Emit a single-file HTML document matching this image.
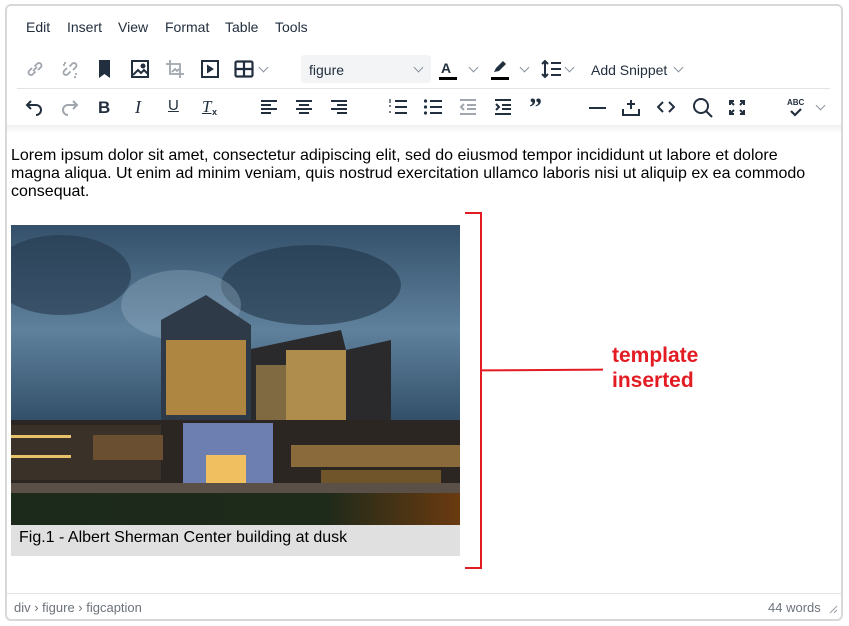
<!DOCTYPE html>
<html><head><meta charset="utf-8"><style>
*{box-sizing:border-box;margin:0;padding:0}
body{width:849px;height:626px;background:#fff;font-family:"Liberation Sans",Arial,sans-serif;position:relative;overflow:hidden}
.frame{position:absolute;left:5px;top:4px;width:838px;height:617px;border:2px solid #d8d8d8;border-radius:6px}
.menu{position:absolute;top:19px;font-size:14px;color:#222f3e}
.t{position:absolute;color:#222f3e}
svg.i{position:absolute}
.chev{position:absolute;width:7px;height:7px;border-right:1.5px solid #8a939d;border-bottom:1.5px solid #8a939d;transform:rotate(45deg)}
</style></head><body>
<div class="frame"></div>
<div style="position:absolute;left:7px;top:125px;width:834px;height:8px;background:linear-gradient(#eef0f2,#fff)"></div>
<div class="menu" style="left:26px">Edit</div>
<div class="menu" style="left:67px">Insert</div>
<div class="menu" style="left:118px">View</div>
<div class="menu" style="left:165px">Format</div>
<div class="menu" style="left:225px">Table</div>
<div class="menu" style="left:275px">Tools</div>

<svg class="i" style="left:24px;top:58px" width="22" height="22" viewBox="0 0 22 22" fill="none" stroke="#a0a6ad" stroke-width="1.8"><path d="M9 13l4-4M8 10l-3 3a2.5 2.5 0 003.5 3.5l3-3M14 12l3-3a2.5 2.5 0 00-3.5-3.5l-3 3"/></svg>
<svg class="i" style="left:59px;top:58px" width="22" height="22" viewBox="0 0 22 22" fill="none" stroke="#a0a6ad" stroke-width="1.8"><path d="M8 10l-3 3a2.5 2.5 0 003.5 3.5l3-3M14 12l3-3a2.5 2.5 0 00-3.5-3.5l-3 3M6 4v2M4 7h2M16 16h2M16 18v2"/></svg>
<svg class="i" style="left:97px;top:59px" width="16" height="20" viewBox="0 0 16 20"><path d="M2 1h11v18l-5.5-4L2 19z" fill="#222f3e"/></svg>
<svg class="i" style="left:130px;top:59px" width="20" height="20" viewBox="0 0 20 20" fill="none" stroke="#222f3e" stroke-width="2"><rect x="2" y="2" width="16" height="16"/><path d="M3 16l5-5 3 3 3-3 4 4" /><circle cx="13" cy="7" r="1.5" fill="#222f3e"/></svg>
<svg class="i" style="left:164px;top:58px" width="22" height="22" viewBox="0 0 22 22" fill="none" stroke="#a0a6ad" stroke-width="1.8"><path d="M6 2v14h14M2 6h14v14"/><path d="M8 14l3-3 2 2 2-2" /></svg>
<svg class="i" style="left:200px;top:59px" width="20" height="20" viewBox="0 0 20 20"><rect x="2" y="2" width="16" height="16" fill="none" stroke="#222f3e" stroke-width="2"/><path d="M7 5.5l7 4.5-7 4.5z" fill="#222f3e"/></svg>
<svg class="i" style="left:234px;top:60px" width="20" height="18" viewBox="0 0 20 18"><rect x="1.5" y="1.5" width="17" height="15" rx="1.5" fill="none" stroke="#222f3e" stroke-width="2.2"/><path d="M1.5 9h17M10 1.5v15" stroke="#222f3e" stroke-width="2.2"/></svg>
<div class="chev" style="left:260px;top:64px"></div>
<div style="position:absolute;left:301px;top:55px;width:130px;height:28px;background:#f3f4f6;border-radius:3px"></div>
<div class="t" style="left:309px;top:62px;font-size:14px">figure</div>
<div class="chev" style="left:415px;top:64px"></div>
<div class="t" style="left:441px;top:60px;font-size:14px;font-weight:bold">A</div>
<div style="position:absolute;left:439px;top:77px;width:18px;height:3px;background:#000"></div>
<div class="chev" style="left:470px;top:64px"></div>
<svg class="i" style="left:491px;top:60px" width="18" height="15" viewBox="0 0 18 15"><path d="M3 12l2-4 7-7 3 3-7 7z" fill="#222f3e"/></svg>
<div style="position:absolute;left:491px;top:77px;width:18px;height:3px;background:#000"></div>
<div class="chev" style="left:521px;top:64px"></div>
<svg class="i" style="left:540px;top:59px" width="22" height="20" viewBox="0 0 22 20" fill="none" stroke="#222f3e" stroke-width="2"><path d="M5 2v16M2 5l3-3 3 3M2 15l3 3 3-3M11 4h10M11 10h10M11 16h10"/></svg>
<div class="chev" style="left:566px;top:64px"></div>
<div class="t" style="left:591px;top:62px;font-size:14px">Add Snippet</div>
<div class="chev" style="left:675px;top:64px"></div>
<div style="position:absolute;left:17px;top:88px;width:813px;height:1px;background:#e3e3e3"></div>

<svg class="i" style="left:24px;top:98px" width="20" height="20" viewBox="0 0 20 20" fill="none" stroke="#222f3e" stroke-width="2"><path d="M7 3L3 7l4 4M3 7h9a5 5 0 010 10"/></svg>
<svg class="i" style="left:60px;top:98px" width="20" height="20" viewBox="0 0 20 20" fill="none" stroke="#a0a6ad" stroke-width="2"><path d="M13 3l4 4-4 4M17 7H8a5 5 0 000 10"/></svg>
<div class="t" style="left:98px;top:98px;font-size:17px;font-weight:bold">B</div>
<div class="t" style="left:135px;top:97px;font-size:18px;font-style:italic;font-family:'Liberation Serif',serif">I</div>
<div class="t" style="left:168px;top:97px;font-size:15px;text-decoration:underline">U</div>
<div class="t" style="left:202px;top:97px;font-size:17px;font-style:italic;font-family:'Liberation Serif',serif;text-decoration:underline">T</div>
<div class="t" style="left:212px;top:107px;font-size:9px;font-weight:bold">x</div>
<svg class="i" style="left:260px;top:99px" width="18" height="16" viewBox="0 0 18 16" stroke="#222f3e" stroke-width="2"><path d="M1 2h16M1 6h10M1 10h16M1 14h10"/></svg>
<svg class="i" style="left:295px;top:99px" width="18" height="16" viewBox="0 0 18 16" stroke="#222f3e" stroke-width="2"><path d="M1 2h16M4 6h10M1 10h16M4 14h10"/></svg>
<svg class="i" style="left:330px;top:99px" width="18" height="16" viewBox="0 0 18 16" stroke="#222f3e" stroke-width="2"><path d="M1 2h16M7 6h10M1 10h16M7 14h10"/></svg>
<svg class="i" style="left:388px;top:98px" width="20" height="18" viewBox="0 0 20 18" stroke="#222f3e" stroke-width="2"><path d="M7 3h12M7 9h12M7 15h12"/><path d="M2 1v4M1 8h2M1 14h2" stroke-width="1.2"/></svg>
<svg class="i" style="left:423px;top:98px" width="20" height="18" viewBox="0 0 20 18"><g stroke="#222f3e" stroke-width="2"><path d="M7 3h12M7 9h12M7 15h12"/></g><g fill="#222f3e"><circle cx="2.5" cy="3" r="1.6"/><circle cx="2.5" cy="9" r="1.6"/><circle cx="2.5" cy="15" r="1.6"/></g></svg>
<svg class="i" style="left:459px;top:99px" width="18" height="16" viewBox="0 0 18 16" stroke="#a0a6ad" stroke-width="2" fill="none"><path d="M1 1h16M8 6h9M8 10h9M1 15h16M5 5L2 8l3 3"/></svg>
<svg class="i" style="left:494px;top:99px" width="18" height="16" viewBox="0 0 18 16" stroke="#222f3e" stroke-width="2" fill="none"><path d="M1 1h16M8 6h9M8 10h9M1 15h16M2 5l3 3-3 3"/></svg>
<div class="t" style="left:529px;top:93px;font-size:26px;font-weight:bold;font-family:'Liberation Serif',serif;letter-spacing:-2px">”</div>
<div style="position:absolute;left:589px;top:107px;width:17px;height:2px;background:#222f3e"></div>
<svg class="i" style="left:622px;top:98px" width="18" height="18" viewBox="0 0 18 18" stroke="#222f3e" stroke-width="2" fill="none"><path d="M9 2v9M5 6h8M1 11v6h16v-6"/></svg>
<svg class="i" style="left:657px;top:100px" width="18" height="14" viewBox="0 0 18 14" stroke="#222f3e" stroke-width="2" fill="none"><path d="M6 2L1 7l5 5M12 2l5 5-5 5"/></svg>
<svg class="i" style="left:692px;top:97px" width="22" height="22" viewBox="0 0 22 22" stroke="#222f3e" stroke-width="2" fill="none"><circle cx="9" cy="9" r="7"/><path d="M14 14l6 6"/></svg>
<svg class="i" style="left:728px;top:99px" width="18" height="17" viewBox="0 0 18 17" stroke="#222f3e" stroke-width="2" fill="none"><path d="M2 6V2h4M12 2h4v4M2 11v4h4M12 15h4v-4M3 3l3 3M15 3l-3 3M3 14l3-3M15 14l-3-3"/></svg>
<div class="t" style="left:787px;top:98px;font-size:8px;font-weight:bold">ABC</div>
<svg class="i" style="left:789px;top:107px" width="14" height="10" viewBox="0 0 14 10" stroke="#222f3e" stroke-width="2.2" fill="none"><path d="M2 4l4 4 6-6"/></svg>
<div class="chev" style="left:817px;top:102px"></div>

<div style="position:absolute;left:11px;top:147px;width:800px;font-size:16px;line-height:18px;color:#000">Lorem ipsum dolor sit amet, consectetur adipiscing elit, sed do eiusmod tempor incididunt ut labore et dolore magna aliqua. Ut enim ad minim veniam, quis nostrud exercitation ullamco laboris nisi ut aliquip ex ea commodo consequat.</div>

<svg class="i" style="left:11px;top:225px" width="449" height="300" viewBox="0 0 449 300">
<defs><linearGradient id="sky" x1="0" y1="0" x2="0" y2="1"><stop offset="0" stop-color="#34506a"/><stop offset=".35" stop-color="#5f819c"/><stop offset=".7" stop-color="#2c4862"/><stop offset="1" stop-color="#1c2f42"/></linearGradient>
<linearGradient id="gr" x1="0" y1="0" x2="1" y2="0"><stop offset="0" stop-color="#1c2a1c"/><stop offset=".7" stop-color="#1e2a1a"/><stop offset="1" stop-color="#6a3a10"/></linearGradient></defs>
<rect width="449" height="300" fill="url(#sky)"/>
<ellipse cx="50" cy="50" rx="70" ry="40" fill="#25394d" opacity=".6"/>
<ellipse cx="300" cy="60" rx="90" ry="40" fill="#223548" opacity=".6"/>
<ellipse cx="170" cy="80" rx="60" ry="35" fill="#9ab4c8" opacity=".35"/>
<path d="M235 125l95-20 5 20 45-10 0 160H235z" fill="#2a2a2c"/>
<g fill="#e8b85a"><rect x="275" y="125" width="60" height="105" opacity=".7"/><rect x="245" y="140" width="30" height="80" opacity=".45"/></g>
<path d="M150 200V95l45-25 45 30v100z" fill="#2e3a48"/>
<rect x="155" y="115" width="80" height="75" fill="#d9a040" opacity=".75"/>
<rect x="0" y="195" width="449" height="65" fill="#2b2621"/>
<rect x="0" y="200" width="150" height="55" fill="#3a3128"/>
<rect x="0" y="210" width="60" height="3" fill="#e7c26a"/><rect x="0" y="230" width="60" height="3" fill="#e7c26a"/>
<rect x="82" y="210" width="70" height="25" fill="#6a5030"/>
<rect x="280" y="220" width="169" height="22" fill="#8a6a3a"/>
<rect x="172" y="198" width="90" height="62" fill="#6c7fb0"/>
<rect x="195" y="230" width="40" height="30" fill="#f0c060"/>
<rect x="310" y="245" width="120" height="15" fill="#8e6a30" opacity=".7"/>
<rect x="0" y="258" width="449" height="12" fill="#5a5048"/>
<rect x="0" y="268" width="449" height="32" fill="url(#gr)"/>
</svg>
<div style="position:absolute;left:11px;top:525px;width:449px;height:31px;background:#e0e0e0"></div>
<div style="position:absolute;left:19px;top:529px;font-size:16px;color:#000">Fig.1 - Albert Sherman Center building at dusk</div>

<div style="position:absolute;left:465px;top:212px;width:17px;height:357px;border:2px solid #e31b23;border-left:none"></div>
<div style="position:absolute;left:482px;top:369px;width:121px;height:2px;background:#e31b23;transform:rotate(-0.4deg)"></div>
<div style="position:absolute;left:612px;top:343px;font-size:21px;line-height:25px;font-weight:bold;color:#e31b23">template<br>inserted</div>

<div style="position:absolute;left:7px;top:593px;width:834px;height:1px;background:#e3e3e3"></div>
<div style="position:absolute;left:14px;top:600px;font-size:13px;color:#6d737a">div › figure › figcaption</div>
<div style="position:absolute;left:768px;top:600px;font-size:13px;color:#6d737a">44 words</div>
<svg class="i" style="left:828px;top:604px" width="10" height="10" viewBox="0 0 10 10" stroke="#9aa0a6" stroke-width="1"><path d="M9 2L2 9M9 6L6 9"/></svg>
</body></html>
